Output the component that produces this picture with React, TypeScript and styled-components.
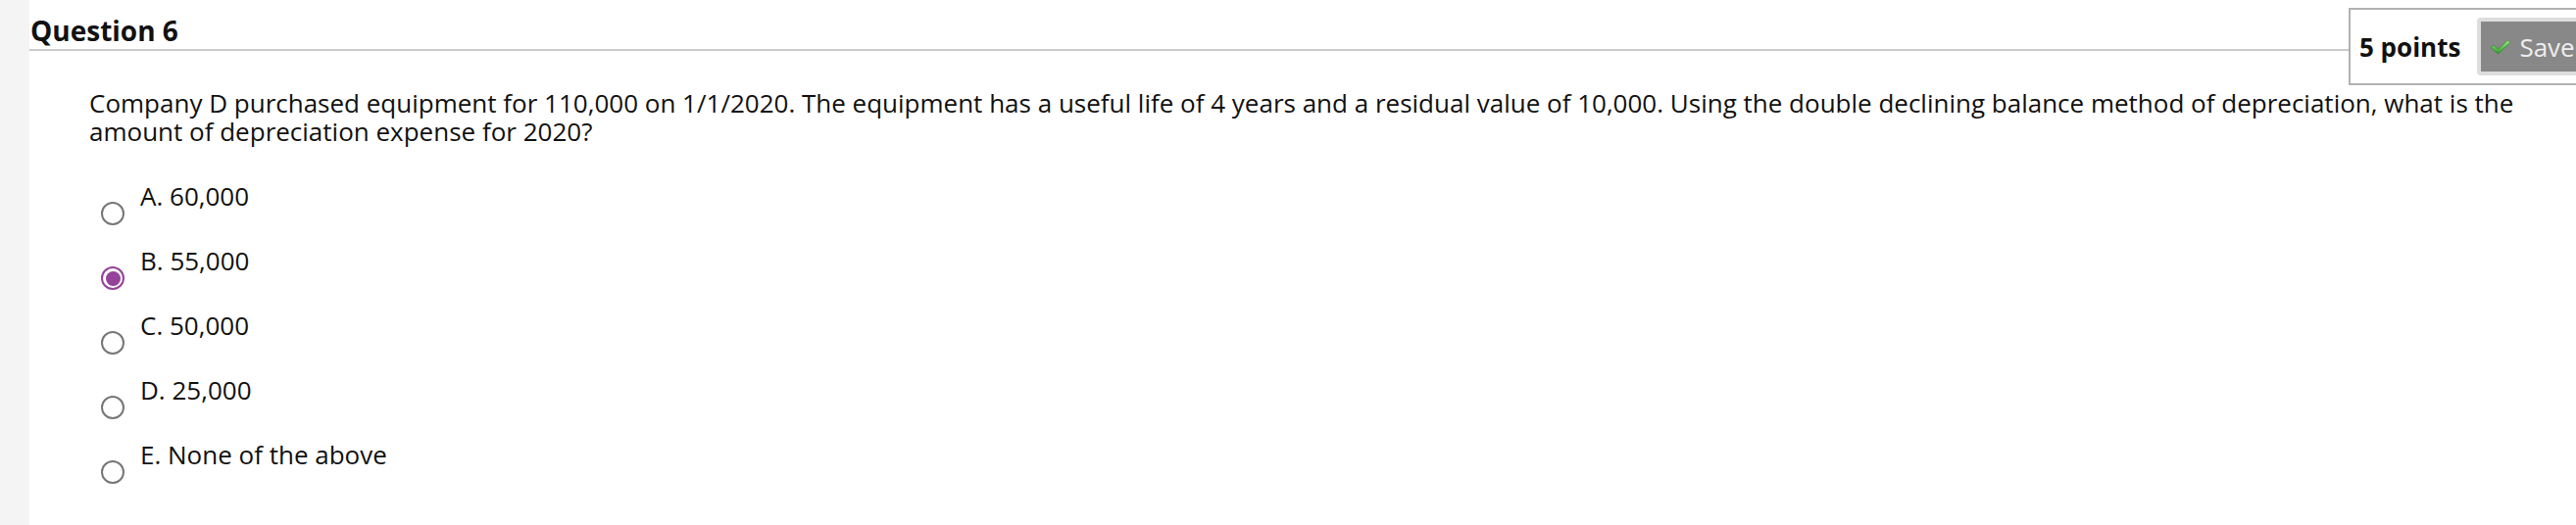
import * as React from "react";
import styled, { createGlobalStyle } from "styled-components";

const GlobalStyle = createGlobalStyle`
  html, body {
    margin: 0;
    padding: 0;
    background: #ffffff;
    overflow: hidden;
  }
  body {
    font-family: "Open Sans", "Noto Sans", Arial, sans-serif;
    color: #111111;
  }
`;

const TITLE_WIDTH = 2366;

const Page = styled.div`
  display: flex;
  width: 2628px;
  height: 536px;
  overflow: hidden;
`;

const SideStrip = styled.div`
  flex: 0 0 30px;
  background: #f4f4f4;
`;

const Main = styled.main`
  flex: 1 1 auto;
  min-width: 0;
`;

const Header = styled.div`
  display: grid;
  grid-template-columns: ${TITLE_WIDTH}px max-content;
  align-items: start;
`;

const Title = styled.h2`
  margin: 0;
  padding: 12px 0 0 1px;
  height: 38px;
  font-size: 28px;
  line-height: 38px;
  font-weight: 700;
  color: #111111;
  border-bottom: 2px solid #cbcbcb;
`;

const PointsBox = styled.div`
  display: flex;
  align-items: center;
  gap: 17px;
  margin-top: 8px;
  height: 75px;
  padding: 0 12px 0 9px;
  border: 2px solid #b2b2b2;
  background: #ffffff;
`;

const Points = styled.span`
  font-size: 26px;
  font-weight: 700;
  line-height: 36px;
  color: #111111;
  white-space: nowrap;
`;

const SavedButton = styled.div`
  display: flex;
  align-items: center;
  gap: 8px;
  height: 51px;
  padding: 0 16px 0 9px;
  border: 4px solid #dddddd;
  border-radius: 4px;
  background: #888888;
  color: #eeeeee;
  font-size: 26px;
  line-height: 36px;
  white-space: nowrap;
`;

const Question = styled.p`
  margin: 4px 30px 0 61px;
  font-size: 26px;
  line-height: 29px;
  color: #111111;
`;

const Options = styled.ul`
  list-style: none;
  margin: 37px 0 0 73px;
  padding: 0;
`;

const OptionRow = styled.li`
  display: flex;
  align-items: flex-start;
  gap: 16px;
  height: 66px;
`;

const Radio = styled.span<{ checked?: boolean }>`
  position: relative;
  flex: 0 0 auto;
  box-sizing: border-box;
  width: 24px;
  height: 24px;
  margin-top: 20px;
  border-radius: 50%;
  border: ${(props) => (props.checked ? "2.5px solid #94429a" : "2px solid #777777")};
  background: #ffffff;

  &::after {
    content: "";
    display: ${(props) => (props.checked ? "block" : "none")};
    position: absolute;
    inset: 2.5px;
    border-radius: 50%;
    background: #94429a;
  }
`;

const OptionLabel = styled.span`
  font-size: 26px;
  line-height: 29px;
  color: #111111;
`;

const CheckIcon = () => (
  <svg width="22" height="16" viewBox="0 0 22 16" aria-hidden="true">
    <defs>
      <linearGradient id="chk" x1="0" y1="0" x2="0" y2="1">
        <stop offset="0" stopColor="#9be886" />
        <stop offset="1" stopColor="#2f9a2a" />
      </linearGradient>
    </defs>
    <path
      d="M1 8.5 L4 6 L8.5 10 L18.5 1 L21 3.5 L8.5 15 Z"
      fill="url(#chk)"
      stroke="#2d7a28"
      strokeWidth="0.6"
      strokeLinejoin="round"
    />
  </svg>
);

const answers = [
  { label: "A. 60,000", checked: false },
  { label: "B. 55,000", checked: true },
  { label: "C. 50,000", checked: false },
  { label: "D. 25,000", checked: false },
  { label: "E. None of the above", checked: false },
];

export default function App() {
  return (
    <>
      <GlobalStyle />
      <Page>
        <SideStrip />
        <Main>
          <Header>
            <Title>Question 6</Title>
            <PointsBox>
              <Points>5 points</Points>
              <SavedButton>
                <CheckIcon />
                <span>Saved</span>
              </SavedButton>
            </PointsBox>
          </Header>
          <Question>
            Company D purchased equipment for 110,000 on 1/1/2020. The
            equipment has a useful life of 4 years and a residual value of
            10,000. Using the double declining balance method of depreciation,
            what is the amount of depreciation expense for 2020?
          </Question>
          <Options>
            {answers.map((a) => (
              <OptionRow key={a.label}>
                <Radio checked={a.checked} />
                <OptionLabel>{a.label}</OptionLabel>
              </OptionRow>
            ))}
          </Options>
        </Main>
      </Page>
    </>
  );
}
